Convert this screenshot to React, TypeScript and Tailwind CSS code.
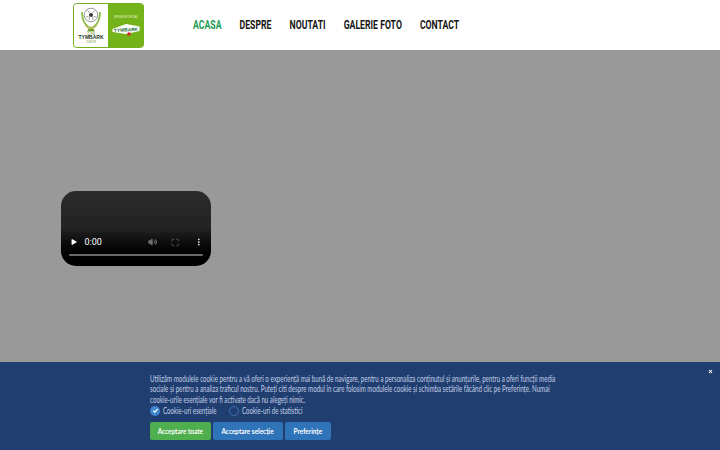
import { EllipsisVertical, Maximize, Play, Volume2, X } from "lucide-react";

const navItems = ["ACASA", "DESPRE", "NOUTATI", "GALERIE FOTO", "CONTACT"];

function Logo() {
  return (
    <svg width="71" height="45" viewBox="0 0 71 45" className="shrink-0">
      <rect x="0.5" y="0.5" width="70" height="44" rx="3" fill="#ffffff" stroke="#74ad1f" />
      <path d="M35 1h33a2.500 2.500 0 0 1 2.500 2.500v38a2.500 2.500 0 0 1-2.500 2.500H35z" fill="#74b31a" />
      {/* cup and ball */}
      <path d="M9 9c0 10 5 15 9 16 4-1 9-6 9-16" fill="none" stroke="#8dbb45" strokeWidth="1.800" />
      <path d="M12 22c2 3 4 4 6 4s4-1 6-4" fill="none" stroke="#c9a93a" strokeWidth="1" />
      <circle cx="18" cy="12" r="6.800" fill="#fff" stroke="#555555" strokeWidth="0.600" />
      <path d="M18 9.800l2.100 1.500-.8 2.500h-2.600l-.8-2.500z" fill="#333333" />
      <path d="M14.500 7.500l2 2.500M21.500 7.500l-2 2.500M12.500 14l3-.500M23.500 14l-3-.500M16 17l.500-3M20 17l-.500-3" stroke="#666666" strokeWidth="0.600" />
      <path d="M15.500 26h5l1.500 2.500h-8z" fill="#6f9f2a" />
      <text x="18" y="31.500" textAnchor="middle" fontSize="2.800" fill="#7a9a3a" fontFamily="Liberation Sans, sans-serif">CUPA</text>
      <text x="18" y="36" textAnchor="middle" fontSize="5" fontWeight="700" fill="#23351e" fontFamily="Liberation Sans, sans-serif">TYMBARK</text>
      <text x="18" y="39.500" textAnchor="middle" fontSize="2.600" fill="#7a9a3a" fontFamily="Liberation Sans, sans-serif">JUNIOR</text>
      <text x="53" y="15" textAnchor="middle" fontSize="2.600" fill="#eef7dc" fontFamily="Liberation Sans, sans-serif">SPONSOR OFICIAL</text>
      {/* sponsor badge */}
      <path d="M39.500 26l13.500-5 13.500 2.500v4.500l-13.500 3-13.500-2z" fill="#fff" />
      <text x="53" y="28.500" textAnchor="middle" fontSize="4.800" fontWeight="700" fill="#1c6b35" transform="rotate(-3 53 27)" fontFamily="Liberation Sans, sans-serif">TYMBARK</text>
      <circle cx="56" cy="31" r="1.800" fill="#d8262c" />
    </svg>
  );
}

function VideoPlayer() {
  return (
    <div className="w-[150px] h-[75px] rounded-[15px] bg-gradient-to-b from-[#2c2c2c] via-[#222222] to-black flex flex-col justify-end px-[8px] pb-[10px] font-['Roboto',sans-serif]">
      <div className="flex items-center h-[12px] text-white">
        <Play className="w-[8px] h-[8px] fill-white ml-[1px]" strokeWidth={0} />
        <span className="ml-[7px] text-[9px] leading-none">0:00</span>
        <Volume2 className="w-[10px] h-[10px] ml-[46px] text-[#6f6f6f] fill-[#6f6f6f]" />
        <Maximize className="w-[9px] h-[9px] ml-[14px] text-[#6f6f6f]" />
        <EllipsisVertical className="w-[10px] h-[10px] ml-[14px] text-white" />
      </div>
      <div className="h-[2px] mt-[6px] bg-[#6a6a6a] rounded-full" />
    </div>
  );
}

function CookieButton({ label, className }: { label: string; className: string }) {
  return (
    <button className={`h-[18px] rounded-[2px] text-[8px] font-bold text-white flex items-center justify-center ${className}`}>
      <span className="inline-block whitespace-nowrap scale-x-[0.8]">{label}</span>
    </button>
  );
}

export default function App() {
  return (
    <div className="h-[450px] overflow-hidden bg-[#999999] font-['Lato',sans-serif]">
      <header className="h-[50px] bg-white flex items-center pl-[73px]">
        <Logo />
        <nav className="flex gap-[26px] ml-[49px] origin-left scale-x-[0.695] whitespace-nowrap font-['Roboto',sans-serif]">
          {navItems.map((item, i) => (
            <a
              key={item}
              className={`text-[12.500px] font-bold leading-none ${i === 0 ? "text-[#1f9d55]" : "text-[#161616]"}`}
            >
              {item}
            </a>
          ))}
        </nav>
      </header>

      <main className="pt-[141px] pl-[61px]">
        <VideoPlayer />
      </main>

      <div className="fixed left-0 right-0 bottom-0 h-[88px] bg-[#203e70] pl-[150px] pt-[11.500px]">
        <button className="absolute top-[7px] right-[7px] text-white">
          <X className="w-[5px] h-[5px]" strokeWidth={5} />
        </button>
        <p className="w-[600px] origin-left scale-x-[0.685] whitespace-nowrap text-[9px] leading-[10.500px] text-[#c3d0e6]">
          Utilizăm modulele cookie pentru a vă oferi o experiență mai bună de navigare, pentru a personaliza conținutul și anunțurile, pentru a oferi funcții media
          <br />
          sociale și pentru a analiza traficul nostru. Puteți citi despre modul în care folosim modulele cookie și schimba setările făcând clic pe Preferințe. Numai
          <br />
          cookie-urile esențiale vor fi activate dacă nu alegeți nimic.
        </p>
        <div className="flex items-center mt-[0.500px] h-[10px] text-[9px] whitespace-nowrap text-[#c3d0e6]">
          <span className="w-[10px] h-[10px] rounded-full bg-[#3f86cf] flex items-center justify-center">
            <svg width="7" height="7" viewBox="0 0 7 7">
              <path d="M1.200 3.600l1.600 1.600 3-3.400" fill="none" stroke="#fff" strokeWidth="1.200" />
            </svg>
          </span>
          <span className="ml-[3px] w-[56px] origin-left scale-x-[0.68]">Cookie-uri esențiale</span>
          <span className="ml-[10px] w-[10px] h-[10px] rounded-full border border-[#3a72b0]" />
          <span className="ml-[3px] origin-left scale-x-[0.68]">Cookie-uri de statistici</span>
        </div>
        <div className="flex gap-[2px] mt-[6px]">
          <CookieButton label="Acceptare toate" className="w-[61px] bg-[#4fae4e]" />
          <CookieButton label="Acceptare selecție" className="w-[70px] bg-[#2f73b8]" />
          <CookieButton label="Preferințe" className="w-[46px] bg-[#2f73b8]" />
        </div>
      </div>
    </div>
  );
}
